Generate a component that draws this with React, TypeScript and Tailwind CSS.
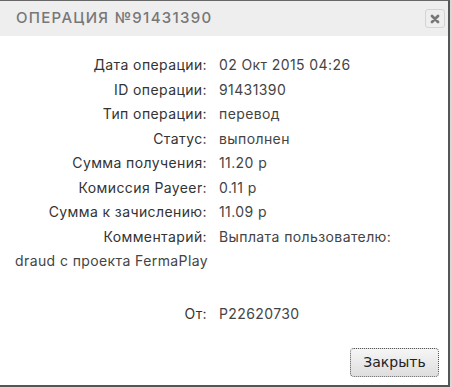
const rows: [string, string][] = [
  ["Дата операции:", "02 Окт 2015 04:26"],
  ["ID операции:", "91431390"],
  ["Тип операции:", "перевод"],
  ["Статус:", "выполнен"],
  ["Сумма получения:", "11.20 р"],
  ["Комиссия Payeer:", "0.11 р"],
  ["Сумма к зачислению:", "11.09 р"],
  ["Комментарий:", "Выплата пользователю:"],
];

const Row = ({ label, value }: { label: string; value: string }) => (
  <div className="leading-[24.5px] flex">
    <span className="w-[192px] shrink-0 text-right text-[#333]">{label}</span>
    <span className="ml-[12px] text-[#444]">{value}</span>
  </div>
);

export default function App() {
  return (
    <div className="w-[452px] h-[388px] bg-[#d8d8d8] font-['Inter',sans-serif]">
      <div className="w-[450px] h-[387px] bg-white border-t border-t-[#666] border-r-2 border-r-[#555] border-b-2 border-b-[#555] flex flex-col">
        <div className="h-[35px] bg-[#eeeeee] flex items-center justify-between pl-[16px] pr-[3px]">
          <span className="text-[15px] tracking-[1.3px] text-[#777] font-medium">ОПЕРАЦИЯ №91431390</span>
          <button className="w-[20px] h-[19px] rounded-[3px] border border-[#d4d4d4] bg-[#eeeeee] flex items-center justify-center">
            <svg width="10" height="10" viewBox="0 0 10 10">
              <path d="M2 2L8 8M8 2L2 8" stroke="#777" strokeWidth="2.8" strokeLinecap="round" />
            </svg>
          </button>
        </div>
        <div className="flex-1 pl-[15px] pr-[40px] pt-[17px] text-[14px] tracking-[0.4px] flex flex-col">
          {rows.map(([l, v]) => (
            <Row key={l} label={l} value={v} />
          ))}
          <div className="leading-[24.5px] text-[#444]">draud с проекта FermaPlay</div>
          <div className="mt-[28px]">
            <Row label="От:" value="P22620730" />
          </div>
          <div className="flex-1 flex items-end justify-end pb-[8px]">
            <button className="-mr-[31px] w-[89px] h-[29px] rounded-[4px] border border-dotted border-[#555] bg-gradient-to-b from-[#f6f6f6] to-[#dedede] text-[14px] tracking-normal text-[#222] font-['DejaVu_Sans',sans-serif]">
              Закрыть
            </button>
          </div>
        </div>
      </div>
    </div>
  );
}
